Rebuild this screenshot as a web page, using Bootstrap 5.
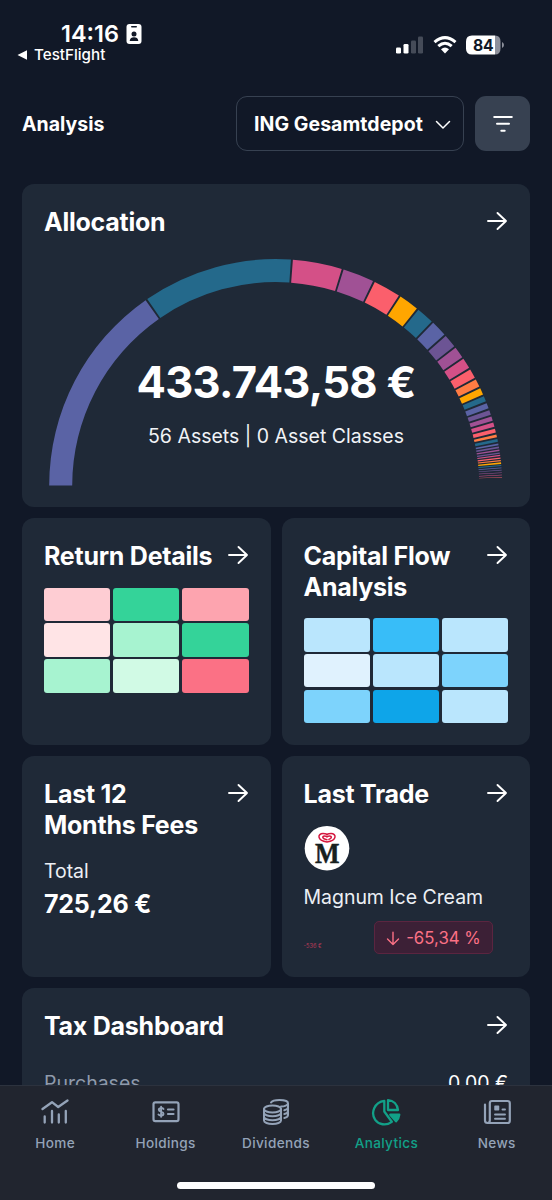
<!DOCTYPE html>
<html lang="en">
<head>
<meta charset="utf-8">
<meta name="viewport" content="width=device-width, initial-scale=1">
<title>Analysis</title>
<link rel="stylesheet" href="https://cdn.jsdelivr.net/npm/bootstrap@5.3.0/dist/css/bootstrap.min.css">
<style>
  body { background: #111827; color: #fff; font-family: Inter, "Liberation Sans", sans-serif; font-size: 19.5px; height: 1200px; overflow: hidden; }
  svg { display: block; flex-shrink: 0; }
  .status-bar { height: 96px; padding: 22px 48.5px 0 17px; line-height: 1; }
  .clock { font-size: 23.5px; font-weight: 600; line-height: 24px; padding-left: 44px; gap: 6.5px; letter-spacing: 0; }
  .back-app { font-size: 15.2px; font-weight: 500; line-height: 16px; gap: 6px; margin-top: 1px; }
  .signals { padding-top: 13px; gap: 9px; }
  .page-head { height: 55px; padding: 0 22px; margin-bottom: 33px; }
  .page-head h1 { font-size: 19.5px; font-weight: 700; padding-top: 2px; }
  .btn-depot { width: 228px; height: 55px; border: 1.5px solid #374151; border-radius: 11px; color: #fff; font-size: 19.5px; font-weight: 700; padding: 2px 12px 0 17px; letter-spacing: .05px; }
  .btn-filter { width: 55px; height: 55px; margin-left: 11px; background: #374151; border-radius: 11px; padding: 0; }
  .tiles { padding: 0 22px; display: grid; grid-template-columns: 1fr 1fr; grid-template-rows: 323px 226.5px 220.5px 240px; gap: 11.4px 11px; }
  .tile { background: #1f2937; border-radius: 12px; padding: 22px; min-width: 0; }
  .wide { grid-column: span 2; }
  .tile h2 { font-size: 25px; line-height: 30.7px; font-weight: 700; margin: 1px 0 -1px; letter-spacing: -.25px; }
  .arrow { margin-top: 4px; }
  .gauge { width: 464px; margin: 15px auto 0; }
  .gauge-text { inset: 98px 0 auto; }
  .amount { font-size: 43.5px; font-weight: 700; line-height: 64px; letter-spacing: -.75px; }
  .assets { line-height: 44px; color: #f1f3f6; }
  .heat { display: grid; grid-template-columns: repeat(3, 1fr); grid-auto-rows: 33.3px; gap: 2.6px; margin-top: 16.5px; }
  .heat i { border-radius: 3px; }
  .soft { color: #eceff4; line-height: 30px; letter-spacing: -.04px; }
  .fee { font-size: 25px; font-weight: 700; line-height: 34px; letter-spacing: -.25px; padding-top: 1px; }
  .delta { font-size: 5.6px; color: #b93b57; line-height: 6px; padding-bottom: 5px; }
  .pct { width: 119.5px; height: 33px; margin-right: 15px; background: #3c2036; border: 1.5px solid #5b2540; border-radius: 5px; color: #fb7185; font-size: 16.8px; gap: 6.5px; padding-top: 1px; }
  .tax-row { margin-top: 27px; line-height: 30px; }
  .tab-bar { height: 115px; background: #21252f; border-top: 1px solid #2c323e; color: #94a3b8; padding-top: 12px; }
  .tab-bar a { width: 110.4px; color: inherit; font-size: 13.6px; font-weight: 500; letter-spacing: .35px; line-height: 17px; gap: 9px; }
  .tab-bar a.on { color: #12a088; }
  .home-line { width: 198px; height: 7px; background: #fff; margin-top: 30px; }
</style>
</head>
<body>
<svg width="0" height="0" class="position-absolute">
  <symbol id="arrow" viewBox="0 0 22 22"><path d="M2 11H20M11.500 3 20 11 11.500 19" fill="none" stroke="#fff" stroke-width="1.900" stroke-linecap="round" stroke-linejoin="round"/></symbol>
</svg>

<div class="status-bar d-flex justify-content-between align-items-start">
  <div>
    <div class="clock d-flex align-items-center">14:16
      <svg width="16" height="20" viewBox="0 0 16 20"><rect x=".5" width="15" height="20" rx="3" fill="#fff"/><rect x="5" y="2" width="6" height="1.600" rx=".8" fill="#111827"/><circle cx="8" cy="10" r="2.500" fill="#111827"/><path d="M3.700 17c.2-2.800 2-3.800 4.300-3.800s4.100 1 4.300 3.800z" fill="#111827"/></svg>
    </div>
    <div class="back-app d-flex align-items-center">
      <svg width="11" height="10" viewBox="0 0 11 10"><path d="M.5 5 10 .3v9.400z" fill="#fff"/></svg>TestFlight
    </div>
  </div>
  <div class="signals d-flex align-items-center">
    <svg width="28" height="18" viewBox="0 0 28 18"><rect x="0" y="11.500" width="5" height="6" rx="1.300" fill="#fff"/><rect x="7.500" y="8" width="5" height="9.500" rx="1.300" fill="#fff"/><rect x="15" y="4.500" width="5" height="13" rx="1.300" fill="#454b58"/><rect x="22" y="0.500" width="5" height="17" rx="1.300" fill="#454b58"/></svg>
    <svg width="24" height="18" viewBox="0 0 24 18"><g fill="none" stroke="#fff" stroke-width="3"><path d="M1.500 6.200Q12-3 22.500 6.200"/><path d="M5.300 10.200Q12 4.300 18.700 10.200"/></g><path d="M8 13.300Q12 9.700 16 13.300L12 17.500Z" fill="#fff"/></svg>
    <svg width="38" height="20" viewBox="0 0 38 20"><path d="M6 .5H29V19.500H6Q0 19.500 0 13.500V6.500Q0 .5 6 .5Z" fill="#fff"/><path d="M29 .5Q34.500.5 34.500 6.500V13.500Q34.500 19.500 29 19.500Z" fill="#8d909b"/><path d="M36 7Q38 8 38 10T36 13Z" fill="#8d909b"/><text x="17.300" y="15.700" text-anchor="middle" font-size="15.700" font-weight="700" fill="#111827">84</text></svg>
  </div>
</div>

<header class="page-head d-flex align-items-center">
  <h1 class="m-0 me-auto">Analysis</h1>
  <button class="btn btn-depot d-flex align-items-center justify-content-between">ING Gesamtdepot
    <svg width="16" height="10" viewBox="0 0 16 10"><path d="M1.500 1.500 8 8l6.500-6.500" fill="none" stroke="#fff" stroke-width="1.500" stroke-linecap="round" stroke-linejoin="round"/></svg>
  </button>
  <button class="btn btn-filter d-flex align-items-center justify-content-center">
    <svg width="20" height="18" viewBox="0 0 20 18"><path d="M1.200 2H18.800M4 8.800H16M8.300 15.800H11.700" stroke="#fff" stroke-width="2" stroke-linecap="round"/></svg>
  </button>
</header>

<main class="tiles">
  <section class="tile wide">
    <div class="d-flex justify-content-between align-items-start"><h2>Allocation</h2><svg class="arrow" width="22" height="22"><use href="#arrow"/></svg></div>
    <div class="gauge position-relative">
      <svg id="gauge" width="464" height="236" viewBox="44 252 464 236"></svg>
      <div class="gauge-text position-absolute text-center">
        <div class="amount">433.743,58 €</div>
        <div class="assets">56 Assets | 0 Asset Classes</div>
      </div>
    </div>
  </section>

  <section class="tile">
    <div class="d-flex justify-content-between align-items-start"><h2 class="text-nowrap">Return Details</h2><svg class="arrow" width="22" height="22"><use href="#arrow"/></svg></div>
    <div class="heat">
      <i style="background:#fecdd3"></i><i style="background:#34d399"></i><i style="background:#fda4af"></i>
      <i style="background:#ffe4e6"></i><i style="background:#a7f3d0"></i><i style="background:#34d399"></i>
      <i style="background:#a7f3d0"></i><i style="background:#d1fae5"></i><i style="background:#fb7185"></i>
    </div>
  </section>
  <section class="tile">
    <div class="d-flex justify-content-between align-items-start"><h2>Capital Flow<br>Analysis</h2><svg class="arrow" width="22" height="22"><use href="#arrow"/></svg></div>
    <div class="heat">
      <i style="background:#bae6fd"></i><i style="background:#38bdf8"></i><i style="background:#bae6fd"></i>
      <i style="background:#e0f2fe"></i><i style="background:#bae6fd"></i><i style="background:#7dd3fc"></i>
      <i style="background:#7dd3fc"></i><i style="background:#0ea5e9"></i><i style="background:#bae6fd"></i>
    </div>
  </section>

  <section class="tile">
    <div class="d-flex justify-content-between align-items-start"><h2>Last 12<br>Months Fees</h2><svg class="arrow" width="22" height="22"><use href="#arrow"/></svg></div>
    <div class="soft mt-3">Total</div>
    <div class="fee">725,26 €</div>
  </section>
  <section class="tile">
    <div class="d-flex justify-content-between align-items-start"><h2>Last Trade</h2><svg class="arrow" width="22" height="22"><use href="#arrow"/></svg></div>
    <svg class="mt-3" width="46" height="46" viewBox="0 0 46 46">
      <circle cx="23" cy="23.200" r="22.300" fill="#fff"/>
      <g fill="none" stroke="#d5173f" stroke-width="1.500" stroke-linecap="round"><path d="M23 17C12.500 15.500 13.500 8.500 19 8.500c2.300 0 4 .7 4 1.700 0-1 1.700-1.700 4-1.700 5.500 0 6.500 7-4 8.500z"/><path d="M23 14.700c-5-.8-5.200-3.700-2.500-3.700 1.500 0 2.500.7 2.500 1.400 0-.7 1-1.400 2.500-1.400 2.500 0 2.500 2.500-.6 3.400"/></g>
      <text x="11" y="38.300" textLength="24.500" lengthAdjust="spacingAndGlyphs" font-family="Liberation Serif, serif" font-weight="700" font-size="30" fill="#17211f" stroke="#17211f" stroke-width=".5">M</text>
    </svg>
    <div class="soft" style="margin-top:11px">Magnum Ice Cream</div>
    <div class="d-flex justify-content-between align-items-end" style="margin-top:9.500px">
      <span class="delta">-536 €</span>
      <span class="pct d-flex align-items-center justify-content-center">
        <svg width="14" height="15" viewBox="0 0 14 15"><path d="M7 1.200V13.500M1.500 8 7 13.500 12.500 8" fill="none" stroke="#fb7185" stroke-width="1.400" stroke-linecap="round" stroke-linejoin="round"/></svg>-65,34 %</span>
    </div>
  </section>

  <section class="tile wide">
    <div class="d-flex justify-content-between align-items-start"><h2>Tax Dashboard</h2><svg class="arrow" width="22" height="22"><use href="#arrow"/></svg></div>
    <div class="tax-row d-flex justify-content-between"><span style="color:#8f9aab">Purchases</span><span>0,00 €</span></div>
  </section>
</main>

<nav class="tab-bar fixed-bottom">
  <div class="d-flex">
    <a class="d-flex flex-column align-items-center text-decoration-none" href="#">
      <svg width="28" height="28" viewBox="0 0 28 28" fill="none" stroke="currentColor" stroke-width="2.300" stroke-linecap="round" stroke-linejoin="round"><path d="M1.500 11 11 4.200 17.200 9 26.500 2.500"/><path d="M3.700 18.500V24.500M11 13V24.500M17.800 16.500V24.500M24.800 13V24.500"/></svg>Home</a>
    <a class="d-flex flex-column align-items-center text-decoration-none" href="#">
      <svg width="28" height="28" viewBox="0 0 28 28" fill="none" stroke="currentColor" stroke-width="2.200" stroke-linecap="round" stroke-linejoin="round"><rect x="1.500" y="4.300" width="25" height="18.800" rx="1.800"/><path d="M11.500 11C10.500 9.600 6.800 9.700 6.800 11.800 6.800 14.200 11.500 13.200 11.500 15.700 11.500 17.900 7.500 17.900 6.500 16.500M9.100 8.800V18.700" stroke-width="1.900"/><path d="M16 11.500H21.500M16 16H21.500"/></svg>Holdings</a>
    <a class="d-flex flex-column align-items-center text-decoration-none" href="#">
      <svg width="28" height="28" viewBox="0 0 28 28" fill="none" stroke="currentColor" stroke-width="2" stroke-linecap="round"><ellipse cx="10.500" cy="11" rx="8.500" ry="3.500"/><path d="M2 11V22.500C2 24.500 5.800 26 10.500 26S19 24.500 19 22.500V11M2 14.800C2 16.800 5.800 18.300 10.500 18.300S19 16.800 19 14.800M2 18.700C2 20.700 5.800 22.200 10.500 22.200S19 20.700 19 18.700"/><path d="M9 4.500C10 2.800 13.500 2 17.500 2 22.300 2 26 3.300 26 5.200S22.500 8.500 19 8.600M26 5.200V17C26 18.500 24.500 19.500 22.300 20M26 9.200C26 10.700 24.500 11.700 22.300 12.200M26 13C26 14.500 24.500 15.600 22.300 16"/></svg>Dividends</a>
    <a class="on d-flex flex-column align-items-center text-decoration-none" href="#">
      <svg width="30" height="28" viewBox="0 0 30 28" fill="none" stroke="currentColor" stroke-width="2.300" stroke-linejoin="round"><path d="M13.300 2.800V13.500L20.800 23.800C15 28.300 7.500 26.500 4.200 21.800-.8 14.500 3.800 4 13.300 2.800Z"/><path d="M17 2.200C22.500 2.600 26.300 6.500 27 12H17Z"/><path d="M19.300 16.700H28.300C28 19.600 26.900 21.600 25 23.300Z" fill="currentColor"/></svg>Analytics</a>
    <a class="d-flex flex-column align-items-center text-decoration-none" href="#">
      <svg width="28" height="28" viewBox="0 0 28 28" fill="none" stroke="currentColor" stroke-width="2.200" stroke-linecap="round" stroke-linejoin="round"><path d="M2 6.500V22.500C2 24 3 25 4.500 25H24.500Q26.800 25 26.800 22.700V5.300Q26.800 3 24.500 3H9Q6.800 3 6.800 5.300V22.500C6.800 24 6 25 4.500 25"/><path d="M12 16.500H22M12 20.700H22M19.500 11.500H22" stroke-width="1.900"/><rect x="12" y="8.300" width="3.500" height="3.500" fill="currentColor" stroke-width="1.500"/></svg>News</a>
  </div>
  <div class="home-line rounded-pill mx-auto"></div>
</nav>

<script>
  // Allocation gauge: segment end angles in degrees, clockwise from the left end.
  const teal = '#24698b', blue = '#5a63a5', violet = '#6c5494', plum = '#a05195',
        pink = '#d45087', coral = '#fb5f6c', orange = '#ff7c43', amber = '#ffa600';
  const wide = [[55.2, blue], [94.1, teal], [107.2, pink], [115.7, plum], [123.2, coral], [128.8, amber],
    [133.8, teal], [138.4, blue], [142.3, violet], [145.7, plum], [148.9, pink], [151.8, coral], [154.3, orange],
    [156.5, amber], [158.4, teal], [160.3, blue], [162, violet], [163.6, plum], [165.2, pink], [166.7, coral],
    [167.9, orange], [169.1, teal]];
  // Thin slices: centre angle, width, colour.
  const thin = [[169.5, .42, blue], [170.3, .42, violet], [171.05, .38, plum], [171.75, .36, violet], [172.35, .34, pink],
    [173.03, .34, coral], [173.65, .3, orange], [174.3, .4, amber], [174.9, .25, teal], [175.5, .2, blue],
    [176.1, .2, violet], [176.75, .16, plum], [177.34, .14, pink], [177.9, .1, coral]];
  const pt = (r, a) => { a *= Math.PI / 180; return (275.7 - r * Math.cos(a)).toFixed(2) + ' ' + (485.6 - r * Math.sin(a)).toFixed(2); };
  const slice = (a, b, c) => `<path fill="${c}" d="M${pt(226.5, a)}A226.5 226.5 0 0 1 ${pt(226.5, b)}L${pt(203.5, b)}A203.5 203.5 0 0 0 ${pt(203.5, a)}Z"/>`;
  let start = 0, out = '';
  for (const [end, c] of wide) { out += slice(start ? start + .25 : 0, end - .25, c); start = end; }
  for (const [mid, w, c] of thin) out += slice(mid - w / 2, mid + w / 2, c);
  document.getElementById('gauge').innerHTML = out;
</script>
<script src="https://cdn.jsdelivr.net/npm/bootstrap@5.3.0/dist/js/bootstrap.bundle.min.js"></script>
</body>
</html>
